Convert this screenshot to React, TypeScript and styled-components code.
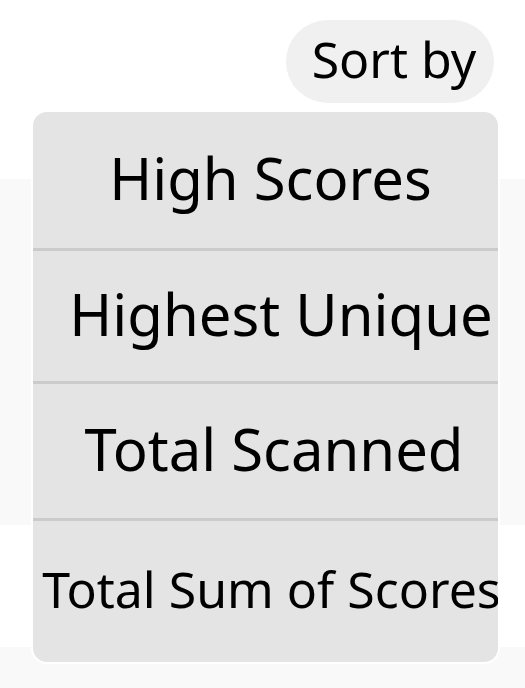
import styled, { createGlobalStyle } from 'styled-components'

const Global = createGlobalStyle`
  html, body { margin: 0; padding: 0; background: #ffffff; }
  body { font-family: "Noto Sans", "Open Sans", sans-serif; color: #000; }
`

const Page = styled.div`
  position: relative;
  width: 525px;
  height: 688px;
  overflow: hidden;
  display: flex;
  flex-direction: column;
`

const Header = styled.header`
  height: 179px;
  display: flex;
  justify-content: flex-end;
  align-items: flex-start;
  padding: 20px 31px 0 0;
  box-sizing: border-box;
  flex-shrink: 0;
`

const SortButton = styled.button`
  height: 83px;
  width: 208px;
  border: none;
  border-radius: 42px;
  background: #f0f0f0;
  font-family: inherit;
  font-size: 50px;
  color: #000;
  padding: 0 0 6px 8px;
  white-space: nowrap;
  cursor: pointer;
`

const Row = styled.div<{ $h: number; $shade?: boolean }>`
  height: ${(p) => p.$h}px;
  flex-shrink: 0;
  background: ${(p) => (p.$shade ? '#f9f9f9' : '#ffffff')};
`

const Menu = styled.ul`
  position: absolute;
  left: 31px;
  top: 110px;
  width: 465px;
  margin: 0;
  padding: 0;
  list-style: none;
  background: #e4e4e4;
  border: 2px solid #ffffff;
  border-radius: 16px;
  overflow: hidden;
`

const Item = styled.li<{ $h: number; $size: number; $shift: number }>`
  height: ${(p) => p.$h}px;
  display: flex;
  align-items: center;
  justify-content: center;
  white-space: nowrap;
  font-size: ${(p) => p.$size}px;
  padding-left: ${(p) => p.$shift}px;
  padding-bottom: 6px;
  box-sizing: border-box;
  & + & {
    border-top: 3px solid #cbcbcb;
  }
`

const options = [
  { label: 'High Scores', h: 136, size: 58, shift: 10 },
  { label: 'Highest Unique', h: 133, size: 58, shift: 31 },
  { label: 'Total Scanned', h: 137, size: 58, shift: 17 },
  { label: 'Total Sum of Scores', h: 144, size: 50, shift: 12 },
]

export default function App() {
  return (
    <>
      <Global />
      <Page>
        <Header>
          <SortButton>Sort by</SortButton>
        </Header>
        <Row $h={346} $shade />
        <Row $h={122} />
        <Row $h={60} $shade />
        <Menu>
          {options.map((o) => (
            <Item key={o.label} $h={o.h} $size={o.size} $shift={o.shift}>
              {o.label}
            </Item>
          ))}
        </Menu>
      </Page>
    </>
  )
}
